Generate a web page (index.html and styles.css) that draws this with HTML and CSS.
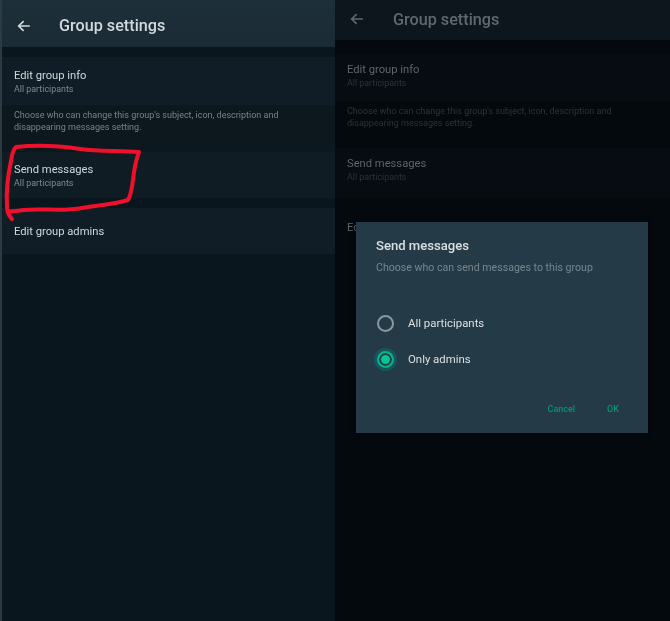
FILE: index.html
```html
<!DOCTYPE html>
<html lang="en">
<head>
<meta charset="utf-8">
<title>Group settings</title>
<link rel="stylesheet" href="styles.css">
</head>
<body>
<div class="shot">
  <section class="screen screen-left">
    <header class="bar">
      <svg class="back" viewBox="0 0 16 14" aria-hidden="true"><path d="M14.8 7H2M7.6 1.2 1.8 7l5.8 5.8" fill="none" stroke="currentColor" stroke-width="2"/></svg>
      <h1>Group settings</h1>
    </header>
    <div class="row first">
      <div class="name">Edit group info</div>
      <div class="sub">All participants</div>
    </div>
    <p class="note">Choose who can change this group's subject, icon, description and<br>disappearing messages setting.</p>
    <div class="row send">
      <div class="name">Send messages</div>
      <div class="sub">All participants</div>
    </div>
    <div class="row admins">
      <div class="name">Edit group admins</div>
    </div>
    <svg class="scribble" viewBox="0 0 150 230" aria-hidden="true"><path d="M12 219C9 216 7 213 7 207 6 192 8 175 11 161 12 154 13 149 16 147 36 145 60 146 80 149 100 152 120 150 139 152 136 160 134 170 133 180 132 188 131 195 128 200 112 205 98 205 82 208 62 212 40 208 24 210 18 211 12 212 8 211" fill="none" stroke="#f1102c" stroke-width="4" stroke-linecap="round" stroke-linejoin="round"/></svg>
  </section>
  <section class="screen screen-right">
    <header class="bar">
      <svg class="back" viewBox="0 0 16 14" aria-hidden="true"><path d="M14.8 7H2M7.6 1.2 1.8 7l5.8 5.8" fill="none" stroke="currentColor" stroke-width="2"/></svg>
      <h1>Group settings</h1>
    </header>
    <div class="row first">
      <div class="name">Edit group info</div>
      <div class="sub">All participants</div>
    </div>
    <p class="note">Choose who can change this group's subject, icon, description and<br>disappearing messages setting.</p>
    <div class="row send">
      <div class="name">Send messages</div>
      <div class="sub">All participants</div>
    </div>
    <div class="row admins">
      <div class="name">Edit group admins</div>
    </div>
    <div class="dialog">
      <h2>Send messages</h2>
      <p class="prompt">Choose who can send messages to this group</p>
      <div class="options">
        <div class="option"><span class="radio"></span><span>All participants</span></div>
        <div class="option"><span class="radio on"></span><span>Only admins</span></div>
      </div>
      <div class="actions"><span>Cancel</span><span>OK</span></div>
    </div>
  </section>
</div>
</body>
</html>
```

FILE: styles.css
```css
* { box-sizing: border-box; }
html, body { margin: 0; height: 100%; background: #0a151c; }
body { font-family: Roboto, "Liberation Sans", sans-serif; overflow: hidden; }
.shot { display: flex; width: 670px; height: 621px; }
.screen { position: relative; width: 335px; height: 621px; overflow: hidden; }
.screen-left { background: #0a161e; border-left: 2px solid #2c3a42; color: #d0d8dc; }
.screen-right { background: #04090d; color: #5d6568; }

.bar { display: flex; align-items: center; padding-left: 15px; }
.screen-left .bar { height: 47px; padding-top: 4px; background: linear-gradient(#1d2f39, #1a2b35); color: #d0d9dd; }
.screen-right .bar { height: 40px; padding-bottom: 2px; background: #0c161c; color: #5f686c; }
.back { width: 14px; height: 12px; flex: none; filter: blur(.3px); }
h1 { margin: 0 0 0 29px; font-size: 16.2px; font-weight: 500; filter: blur(.5px); }
.screen-left h1 { margin-left: 28px; }

.row { padding: 0 12px; filter: blur(.45px); }
.name { font-size: 11.2px; line-height: 14px; }
.sub { margin-top: 1px; font-size: 8.9px; line-height: 11px; color: #7b8a91; }
.screen-right .sub { color: #2c3337; }
.note { margin: 0; padding: 0 12px; font-size: 9px; line-height: 11.5px; color: #76848b; filter: blur(.45px); }
.screen-right .note { color: #2c3337; }

.screen-left .first { height: 48px; margin-top: 10px; padding-top: 12px; background: #101d26; }
.screen-left .note { height: 47px; padding-top: 5px; background: #0c171e; }
.screen-left .send { height: 46px; padding-top: 11px; background: #0f1c24; }
.screen-left .admins { height: 46px; margin-top: 10px; padding-top: 17px; background: #101d26; }

.screen-right .first { height: 47px; margin-top: 14px; padding-top: 9px; background: #060c11; }
.screen-right .note { height: 47px; padding-top: 5px; }
.screen-right .send { height: 50px; padding-top: 9px; background: #060c11; }
.screen-right .admins { margin-top: 14px; padding-top: 9px; }

.dialog { position: absolute; left: 21px; top: 222px; width: 292px; height: 211px; padding: 17px 20px 0; background: #253a47; color: #d9e0e3; box-shadow: 0 0 4px rgba(0,0,0,.5); }
h2 { margin: 0; font-size: 13.1px; line-height: 14px; font-weight: 500; filter: blur(.4px); }
.prompt { margin: 8px 0 0; font-size: 10.6px; line-height: 13px; color: #75878f; filter: blur(.45px); }
.options { display: flex; flex-direction: column; gap: 20px; margin-top: 41px; padding-left: 1px; }
.option { display: flex; align-items: center; gap: 14px; height: 16px; font-size: 11.4px; filter: blur(.4px); }
.radio { width: 17px; height: 17px; flex: none; border: 2px solid #8b999f; border-radius: 50%; }
.radio.on { border-color: #00b388; background: #00c795; box-shadow: inset 0 0 0 2px #253a47, 0 0 0 3px #14575b; }
.actions { display: flex; justify-content: flex-end; gap: 32px; margin-top: 36px; padding-right: 9px; font-size: 9px; line-height: 12px; font-weight: 500; color: #00927a; filter: blur(.5px); }

.scribble { position: absolute; left: -2px; top: 0; width: 150px; height: 230px; }
```
